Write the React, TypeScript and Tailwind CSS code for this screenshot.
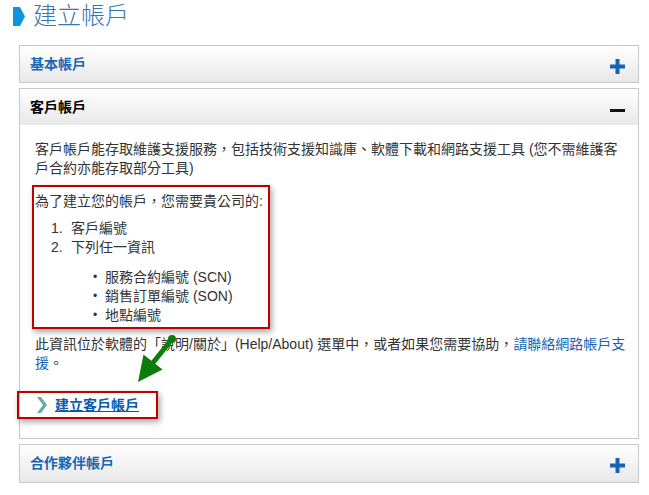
const font = "font-['Liberation_Sans','Noto_Sans_CJK_TC',sans-serif]";

function Plus() {
  return (
    <svg width="15" height="15" viewBox="0 0 15 15" className="mt-[4px]">
      <rect x="0" y="5.5" width="15" height="4" fill="#1565b4" />
      <rect x="5.5" y="0" width="4" height="15" fill="#1565b4" />
    </svg>
  );
}

function Minus() {
  return (
    <svg width="15" height="15" viewBox="0 0 15 15" className="mt-[6px]">
      <rect x="0" y="6" width="15" height="3" fill="#111" />
    </svg>
  );
}

function PanelHeader({ title, open, className }: { title: string; open?: boolean; className?: string }) {
  return (
    <div className={"flex h-[36px] items-center justify-between bg-gradient-to-b from-white to-[#e8e8e8] pl-[10px] pr-[13px] " + (className ?? '')}>
      <span className={'text-[14px] font-bold ' + (open ? 'text-black' : 'text-[#1667b5]')}>{title}</span>
      {open ? <Minus /> : <Plus />}
    </div>
  );
}

export default function App() {
  return (
    <div className={'relative h-[495px] w-[649px] overflow-hidden bg-white text-[#333] ' + font}>
      {/* page title */}
      <div className="flex h-[30px] items-center gap-[8px] pl-[13px] pt-[2px]">
        <svg width="12" height="19" viewBox="0 0 12 19">
          <path d="M0 0 H7 L12 9.5 L7 19 H0 Z" fill="#0b95da" />
        </svg>
        <h1 className="text-[24px] font-light leading-none text-[#3a72b2]">建立帳戶</h1>
      </div>

      <div className="ml-[19px] mt-[15px] flex w-[620px] flex-col gap-[5px]">
        <div className="border border-[#c8c8c8]">
          <PanelHeader title="基本帳戶" />
        </div>

        <div className="border border-[#c8c8c8]">
          <PanelHeader title="客戶帳戶" open />
          <div className="pb-[19px] pl-[15px] pr-[12px] pt-[15px] text-[14px] leading-[19px]">
            <p className="pr-[3px]">
              客戶帳戶能存取維護支援服務，包括技術支援知識庫、軟體下載和網路支援工具 (您不需維護客戶合約亦能存取部分工具)
            </p>

            <div className="-ml-[3px] mt-[7px] w-[238px] border-2 border-[#c00000] pb-[2px] pl-[1px] pt-[5px] shadow-[2px_3px_6px_rgba(0,0,0,0.35)]">
              <p>為了建立您的帳戶，您需要貴公司的:</p>
              <ol className="ml-[16px] mt-[8px]">
                <li className="flex">
                  <span className="w-[20px]">1.</span>客戶編號
                </li>
                <li className="flex">
                  <span className="w-[20px]">2.</span>下列任一資訊
                </li>
              </ol>
              <ul className="ml-[58px] mt-[11px]">
                {['服務合約編號 (SCN)', '銷售訂單編號 (SON)', '地點編號'].map((t) => (
                  <li key={t} className="flex">
                    <span className="w-[12px] text-[12px]">•</span>
                    {t}
                  </li>
                ))}
              </ul>
            </div>

            <p className="mt-[6px]">
              此資訊位於軟體的「說明/關於」(Help/About) 選單中，或者如果您需要協助，
              <a className="text-[#1563b3]">請聯絡網路帳戶支援</a>。
            </p>

            <div className="-ml-[18px] mt-[18px] flex h-[28px] w-[141px] items-center gap-[8px] border-2 border-[#c00000] pl-[17px] shadow-[2px_3px_6px_rgba(0,0,0,0.35)]">
              <svg width="11" height="16" viewBox="0 0 11 16">
                <path d="M1 0 H5 L11 8 L5 16 H1 L7 8 Z" fill="#6aa7a8" />
              </svg>
              <a className="text-[14px] font-bold text-[#0b5aa8] underline underline-offset-1">建立客戶帳戶</a>
            </div>
          </div>
        </div>

        <div className="border border-[#c8c8c8]">
          <PanelHeader title="合作夥伴帳戶" className="h-[37px]" />
        </div>
      </div>

      {/* green annotation arrow */}
      <svg className="pointer-events-none absolute left-0 top-0" width="649" height="495">
        <line x1="172" y1="339" x2="152" y2="364" stroke="#0a7d0a" strokeWidth="5" strokeLinecap="round" />
        <circle cx="172" cy="339" r="4" fill="#0a7d0a" />
        <path d="M138 382 L143.5 354.5 L162.5 369.5 Z" fill="#0a7d0a" />
      </svg>
    </div>
  );
}
